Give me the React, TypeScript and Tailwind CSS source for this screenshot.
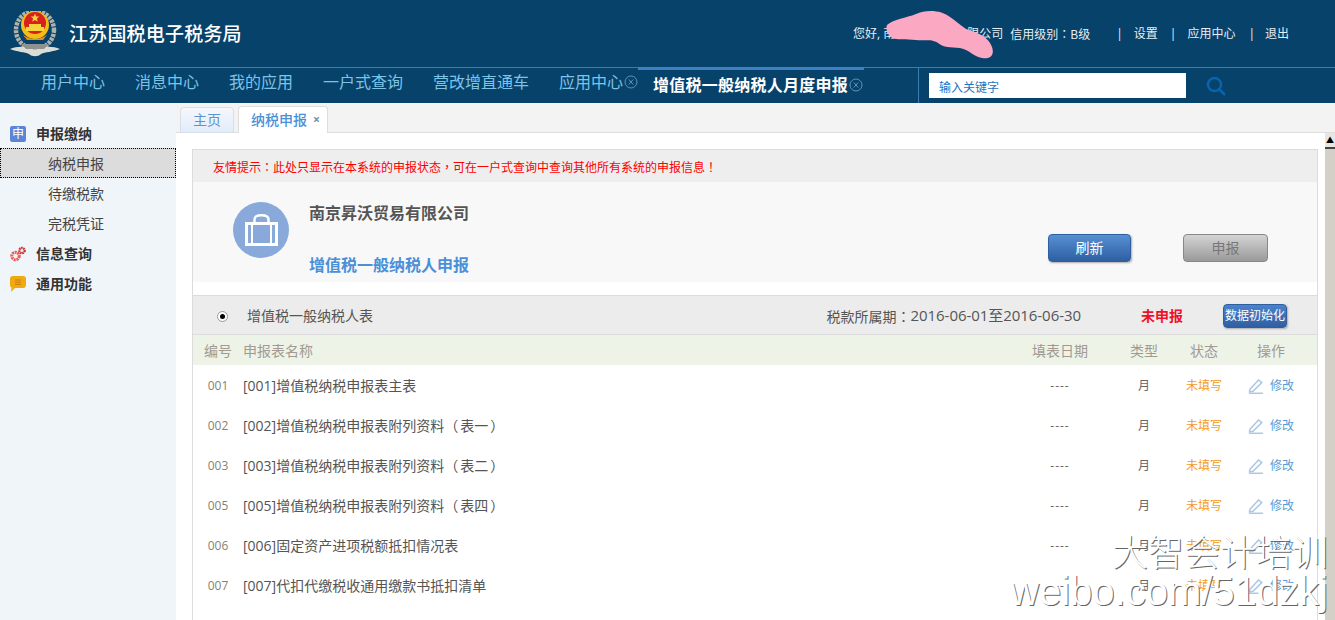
const FONT = 'font-["Open_Sans","Noto_Sans_CJK_SC",sans-serif]'

const navItems = ['用户中心', '消息中心', '我的应用', '一户式查询', '营改增直通车']

const rows = [
  { id: '001', name: '[001]增值税纳税申报表主表' },
  { id: '002', name: '[002]增值税纳税申报表附列资料', note: '表一' },
  { id: '003', name: '[003]增值税纳税申报表附列资料', note: '表二' },
  { id: '005', name: '[005]增值税纳税申报表附列资料', note: '表四' },
  { id: '006', name: '[006]固定资产进项税额抵扣情况表' },
  { id: '007', name: '[007]代扣代缴税收通用缴款书抵扣清单' },
]

function Emblem() {
  return (
    <svg viewBox="0 0 52 46" className="h-[46px] w-[52px]" aria-hidden="true">
      <circle cx="26" cy="19" r="19" fill="none" stroke="#aeb2ad" strokeWidth="4.500" strokeDasharray="3 1" />
      <path d="M1 38 C10 34 20 36 26 39 C32 36 42 34 51 38 C44 41 36 41 32 43 C29 46 23 46 20 43 C16 41 8 41 1 38Z" fill="#dcdcd6" />
      <path d="M12 33 H40 L35 38 H17Z" fill="#8f9290" />
      <circle cx="26" cy="14" r="14" fill="#f4bd14" />
      <circle cx="26" cy="12" r="11" fill="#d8201f" />
      <path d="M26 2.500 l1.200 3 3.200 .1 -2.500 2 .9 3.100 -2.800 -1.800 -2.800 1.800 .9 -3.100 -2.500 -2 3.200 -.1Z" fill="#f7d33c" />
      <path d="M17 16 h18 v4 h-18Z M20 13 h12 v3 h-12Z" fill="#f7d33c" />
      <path d="M14 24 Q26 32 38 24 L34 29 H18Z" fill="#f08c10" />
    </svg>
  )
}

function CloseCircle() {
  return (
    <svg viewBox="0 0 14 14" className="h-[14px] w-[14px] shrink-0" fill="none" stroke="#5f93b8" strokeWidth="1" aria-hidden="true">
      <circle cx="7" cy="7" r="6" />
      <path d="M4.800 4.500 L9.200 9.500 M9.200 4.500 L4.800 9.500" />
    </svg>
  )
}

function Scribble() {
  return (
    <svg viewBox="0 0 110 50" className="absolute left-[33px] top-[-16px] h-[50px] w-[110px]" aria-hidden="true">
      <path
        d="M1 15 C8 9 20 8 30 4 C40 -1 56 0 64 7 C70 11 74 15 80 19 C90 22 100 26 104 33 C110 43 106 50 96 48 C88 47 84 40 74 38 C64 37 58 38 52 33 C46 29 40 31 30 30 C20 29 10 30 6 28 C2 24 -1 20 1 15Z"
        fill="#fba9c2"
      />
    </svg>
  )
}

function PencilIcon() {
  return (
    <svg viewBox="0 0 16 16" className="h-4 w-4 shrink-0" fill="none" stroke="#a9c8e6" strokeWidth="1.500" aria-hidden="true">
      <path d="M1.800 11.500 L10.500 2 L13.800 4.600 L5 13.200 L1.500 13.900Z" />
      <path d="M1 15.300 H15" />
    </svg>
  )
}

function Gears() {
  return (
    <svg viewBox="0 0 16 16" className="h-4 w-4" aria-hidden="true">
      <circle cx="5.500" cy="10" r="3.700" fill="none" stroke="#ee5a52" strokeWidth="3" strokeDasharray="2 0.700" />
      <circle cx="12" cy="4.500" r="2.600" fill="none" stroke="#c62f33" strokeWidth="2.400" strokeDasharray="1.600 0.600" />
    </svg>
  )
}

function Bubble() {
  return (
    <svg viewBox="0 0 16 16" className="h-4 w-4" aria-hidden="true">
      <path d="M3 0 H13 Q16 0 16 3 V9 Q16 12 13 12 H5 L1 16 L1.500 11.500 Q0 11 0 9 V3 Q0 0 3 0Z" fill="#eeaa10" />
      <path d="M5 4 H11 M5 6.200 H11 M5 8.400 H11" stroke="#c77f0b" strokeWidth="1" />
    </svg>
  )
}

function BagIcon() {
  return (
    <svg viewBox="0 0 33 32" className="h-8 w-[33px]" aria-hidden="true">
      <path d="M9.500 9 V5.500 Q9.500 1.200 16.500 1.200 Q23.500 1.200 23.500 5.500 V9" fill="none" stroke="#fff" strokeWidth="2.400" />
      <path d="M0 8 H33 V32 H0Z M3 11 V29 H6 V11Z M8 11 V29 H25 V11Z M27 11 V29 H30 V11Z" fill="#fff" fillRule="evenodd" />
    </svg>
  )
}

function Sidebar() {
  return (
    <aside className="flex w-[176px] shrink-0 flex-col bg-[#f0f5f9] pt-[15px] text-sm text-[#333]">
      <div className="flex h-[30px] items-center gap-[10px] pl-[10px] pt-[2px] font-bold">
        <span className="flex h-4 w-4 items-center justify-center rounded-[2px] bg-[#5b86d6] text-xs font-normal leading-none text-white">申</span>
        申报缴纳
      </div>
      <div className="flex h-[30px] items-center border border-dotted border-black bg-[#dcdcdc] pl-[47px] pt-[2px] text-[#444]">纳税申报</div>
      <div className="flex h-[30px] items-center pl-[48px] pt-[2px] text-[#444]">待缴税款</div>
      <div className="flex h-[30px] items-center pl-[48px] pt-[2px] text-[#444]">完税凭证</div>
      <div className="flex h-[30px] items-center gap-[10px] pl-[10px] pt-[2px] font-bold">
        <Gears />
        信息查询
      </div>
      <div className="flex h-[30px] items-center gap-[10px] pl-[10px] pt-[2px] font-bold">
        <Bubble />
        通用功能
      </div>
    </aside>
  )
}

function Row({ id, name, note }: { id: string; name: string; note?: string }) {
  return (
    <div className="grid h-10 grid-cols-[50px_1fr_108px_60px_60px_74px] items-center pr-[9px] pt-[2px] text-[#666]">
      <span className="text-center text-xs text-[#8a7f72]">{id}</span>
      <span className="text-sm text-[#555]">
        {name}
        {note && (
          <>
            （<span className="px-[2px]">{note}</span>）
          </>
        )}
      </span>
      <span className="text-center text-xs tracking-[1px]">----</span>
      <span className="text-center text-xs">月</span>
      <span className="text-center text-xs text-[#f39a1c]">未填写</span>
      <span className="flex items-center justify-center gap-[6px] text-xs text-[#5b9bd5]">
        <PencilIcon />
        修改
      </span>
    </div>
  )
}

export default function App() {
  return (
    <div className={`relative flex h-[620px] w-[1335px] flex-col overflow-hidden bg-white ${FONT}`}>
      <header className="relative flex h-[67px] items-center justify-between bg-[#07426b] pl-[9px] pr-[46px] text-white">
        <div className="flex items-center gap-2 pt-[1px]">
          <Emblem />
          <span className="text-[19px] font-medium tracking-[0.2px]">江苏国税电子税务局</span>
        </div>
        <div className="relative flex items-center text-xs text-[#e6eef3]">
          <span>您好, 南京昇沃贸易有限公司</span>
          <Scribble />
          <span className="ml-[7px] font-['Noto_Sans_CJK_TC',sans-serif]">信用级别：B级</span>
          <span className="ml-[26px]">|</span>
          <span className="ml-[11px]">设置</span>
          <span className="ml-3">|</span>
          <span className="ml-[11px]">应用中心</span>
          <span className="ml-[13px]">|</span>
          <span className="ml-[10px]">退出</span>
        </div>
      </header>

      <nav className="flex h-[36px] items-stretch border-t border-[#3a7db5] bg-[#07426b] pl-[41px] text-base text-[#7cc3e6]">
        <div className="flex items-center gap-[30px] pb-[7px]">
          {navItems.map((item) => (
            <span key={item}>{item}</span>
          ))}
          <span className="flex items-center gap-px">
            应用中心
            <CloseCircle />
          </span>
        </div>
        <div className="-mt-px flex w-[226px] items-center gap-px border-t-[3px] border-[#3f7fc2] pb-[3px] pl-[15px] font-bold tracking-[0.25px] text-white">
          增值税一般纳税人月度申报
          <CloseCircle />
        </div>
        <div className="ml-[54px] flex items-center border-l border-[#3a7db5] pl-[10px]">
          <input
            readOnly
            value="输入关键字"
            className="h-[25px] w-[257px] bg-white pl-[10px] pt-[2px] text-xs text-[#1c73c4] outline-none"
          />
          <svg viewBox="0 0 20 20" className="ml-5 h-5 w-5" fill="none" stroke="#0a63ad" strokeWidth="2.500" aria-hidden="true">
            <circle cx="8.500" cy="8.500" r="6.500" />
            <path d="M13.500 13.500 L19 19" />
          </svg>
        </div>
      </nav>

      <div className="flex min-h-0 flex-1">
        <Sidebar />
        <main className="flex min-w-0 flex-1 flex-col">
          <div className="flex h-[30px] shrink-0 items-end gap-1 border-b border-[#ddd] bg-[#f3f3f3] pl-1 text-sm">
            <span className="-mb-px flex h-[26px] w-[54px] items-center justify-center rounded-t-[4px] border border-[#d8dfe8] bg-gradient-to-b from-[#f5f8fc] to-[#e2ecfa] text-[#5b93cd]">主页</span>
            <span className="-mb-px flex h-[27px] w-[90px] items-center gap-[6px] rounded-t-[4px] border border-b-0 border-[#ddd] bg-white pl-3 font-medium text-[#4a90d9]">
              纳税申报
              <span className="text-xs font-bold leading-none text-[#6d8fb0]">×</span>
            </span>
          </div>

          <div className="flex min-h-0 flex-1">
            <div className="min-w-0 flex-1 pl-4 pr-[7px] pt-4">
              <div className="h-full border-x border-t border-[#dcdcdc]">
                <div className="flex h-[32px] items-center bg-[#eee] pl-5 pt-[2px] font-['Noto_Sans_CJK_TC',sans-serif] text-xs text-[#f00]">
                  友情提示：此处只显示在本系统的申报状态，可在一户式查询中查询其他所有系统的申报信息！
                </div>
                <div className="flex h-[100px] items-start bg-[#f8f8f8] pl-10">
                  <div className="mt-5 flex h-14 w-14 items-center justify-center rounded-full bg-[#88a9d9]">
                    <BagIcon />
                  </div>
                  <div className="ml-5 flex flex-col pt-[20px] text-base font-bold leading-[22px]">
                    <span className="text-[#555]">南京昇沃贸易有限公司</span>
                    <span className="mt-[30px] text-[#4a90d9]">增值税一般纳税人申报</span>
                  </div>
                  <button className="ml-auto mt-[52px] h-7 w-[83px] rounded-[4px] border border-[#2f5f9f] bg-gradient-to-b from-[#5690d2] to-[#2f5fa3] text-sm text-white shadow-[1px_1px_2px_#aaa]">刷新</button>
                  <button className="ml-[52px] mr-[49px] mt-[52px] h-7 w-[85px] rounded-[4px] border border-[#888] bg-gradient-to-b from-[#d4d4d4] to-[#9a9a9a] text-sm text-[#777]">申报</button>
                </div>

                <div className="mt-[13px] flex h-[40px] items-center border-y border-[#dcdcdc] bg-[#ececec] pt-[2px] text-sm text-[#555]">
                  <span className="ml-6 flex h-[11px] w-[11px] items-center justify-center rounded-full border border-[#999] bg-white">
                    <span className="h-[5px] w-[5px] rounded-full bg-black" />
                  </span>
                  <span className="ml-[19px]">增值税一般纳税人表</span>
                  <span className="ml-auto flex items-center">
                    <span className="font-['Noto_Sans_CJK_TC',sans-serif]">税款所属期：</span>
                    <span className="text-[15px] tracking-[-0.05px]">2016-06-01至2016-06-30</span>
                  </span>
                  <span className="ml-[60px] font-bold text-[#f0102a]">未申报</span>
                  <button className="ml-10 mr-[30px] h-6 w-16 rounded-[4px] border border-[#2f5f9f] bg-gradient-to-b from-[#4a83cc] to-[#2f5fa3] text-xs text-white shadow-[1px_1px_2px_#aaa]">数据初始化</button>
                </div>

                <div className="grid h-[30px] grid-cols-[50px_1fr_108px_60px_60px_74px] items-center bg-[#eef3e7] pr-[9px] pt-[2px] text-sm text-[#a09a92]">
                  <span className="text-center">编号</span>
                  <span>申报表名称</span>
                  <span className="text-center">填表日期</span>
                  <span className="text-center">类型</span>
                  <span className="text-center">状态</span>
                  <span className="text-center">操作</span>
                </div>

                {rows.map((row) => (
                  <Row key={row.id} id={row.id} name={row.name} note={row.note} />
                ))}
              </div>
            </div>

            <div className="flex w-[10px] shrink-0 flex-col bg-[#d4d0c8]">
              <div className="flex h-[16px] items-center justify-center border-b-2 border-[#444] bg-[#e8e6e0] text-[8px] leading-none text-black">▲</div>
            </div>
          </div>
        </main>
      </div>

      <div className="pointer-events-none absolute bottom-[9px] right-[7px] flex flex-col items-end font-light leading-none text-white [text-shadow:1px_1px_0_#666]">
        <span className="text-[36px]">大智会计培训</span>
        <span className="font-['Liberation_Sans',sans-serif] text-[40px]">weibo.com/51dzkj</span>
      </div>
    </div>
  )
}
